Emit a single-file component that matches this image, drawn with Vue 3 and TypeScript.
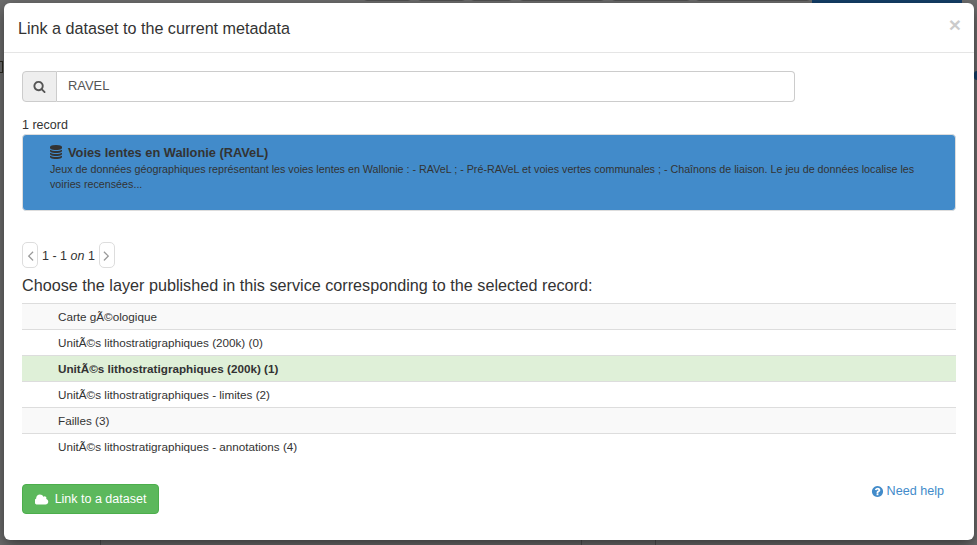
<script setup lang="ts">
interface Layer { name: string; selected?: boolean }
const layers: Layer[] = [
  { name: 'Carte gÃ©ologique' },
  { name: 'UnitÃ©s lithostratigraphiques (200k) (0)' },
  { name: 'UnitÃ©s lithostratigraphiques (200k) (1)', selected: true },
  { name: 'UnitÃ©s lithostratigraphiques - limites (2)' },
  { name: 'Failles (3)' },
  { name: 'UnitÃ©s lithostratigraphiques - annotations (4)' },
]
const tabs = [
  { left: 363, width: 49 },
  { left: 417, width: 49 },
  { left: 470, width: 43 },
  { left: 519, width: 86 },
  { left: 611, width: 80 },
  { left: 695, width: 116 },
]
</script>

<template>
  <div class="page">
    <div class="backdrop">
      <span v-for="t in tabs" :key="t.left" class="tab" :style="{ left: t.left + 'px', width: t.width + 'px' }"></span>
      <span class="bluebar"></span>
      <span class="bluedot"></span>
      <span class="leftmark"></span>
      <span class="vline v1"></span>
      <span class="vline v2"></span>
      <span class="vline v3"></span>
    </div>
    <div class="modal">
      <header class="head">
        <h4>Link a dataset to the current metadata</h4>
        <span class="close">×</span>
      </header>
      <main class="body">
        <div class="search">
          <span class="addon">
            <svg width="13" height="13" viewBox="0 0 1792 1792"><path fill="#555" d="M1216 832q0-185-131.500-316.500t-316.500-131.500-316.500 131.500-131.500 316.500 131.500 316.500 316.500 131.500 316.500-131.500 131.500-316.500zm512 832q0 52-38 90t-90 38q-54 0-90-38l-343-342q-179 124-399 124-143 0-273.500-55.500t-225-150-150-225-55.500-273.500 55.500-273.500 150-225 225-150 273.500-55.500 273.500 55.500 225 150 150 225 55.500 273.500q0 220-124 399l343 343q37 37 37 90z"/></svg>
          </span>
          <input class="field" value="RAVEL" />
        </div>
        <div class="count">1 record</div>
        <div class="record">
          <div class="rec-title">
            <svg width="14" height="14" viewBox="0 0 1792 1792"><path fill="#333" d="M896 768q237 0 443-43t325-127v170q0 69-103 128t-280 93.500-385 34.500-385-34.500-280-93.500-103-128v-170q119 84 325 127t443 43zm0 768q237 0 443-43t325-127v170q0 69-103 128t-280 93.500-385 34.500-385-34.500-280-93.500-103-128v-170q119 84 325 127t443 43zm0-384q237 0 443-43t325-127v170q0 69-103 128t-280 93.500-385 34.500-385-34.500-280-93.500-103-128v-170q119 84 325 127t443 43zm0-1152q208 0 385 34.500t280 93.500 103 128v128q0 69-103 128t-280 93.500-385 34.500-385-34.500-280-93.500-103-128v-128q0-69 103-128t280-93.500 385-34.500z"/></svg>
            <strong>Voies lentes en Wallonie (RAVeL)</strong>
          </div>
          <p>Jeux de données géographiques représentant les voies lentes en Wallonie : - RAVeL ; - Pré-RAVeL et voies vertes communales ; - Chaînons de liaison. Le jeu de données localise les voiries recensées...</p>
        </div>
        <div class="pager">
          <span class="pg">
            <svg width="17" height="17" viewBox="0 0 1792 1792"><path fill="#999" d="M1203 544q0 13-10 23l-393 393 393 393q10 10 10 23t-10 23l-50 50q-10 10-23 10t-23-10l-466-466q-10-10-10-23t10-23l466-466q10-10 23-10t23 10l50 50q10 10 10 23z"/></svg>
          </span>
          <span class="pg-text">1 - 1 <em>on</em> 1</span>
          <span class="pg">
            <svg width="17" height="17" viewBox="0 0 1792 1792"><path fill="#999" d="M1171 960q0 13-10 23l-466 466q-10 10-23 10t-23-10l-50-50q-10-10-10-23t10-23l393-393-393-393q-10-10-10-23t10-23l50-50q10-10 23-10t23 10l466 466q10 10 10 23z"/></svg>
          </span>
        </div>
        <h5>Choose the layer published in this service corresponding to the selected record:</h5>
        <ul class="layers">
          <li v-for="(l, i) in layers" :key="i" :class="{ selected: l.selected, odd: i % 2 === 0 }">{{ l.name }}</li>
        </ul>
        <div class="foot">
          <button class="btn">
            <svg width="14" height="13" viewBox="0 0 1920 1792"><path fill="#fff" d="M1920 1216q0 159-112.500 271.500t-271.500 112.500h-1088q-185 0-316.500-131.500t-131.500-316.500q0-132 71-241.500t187-163.500q-2-28-2-43 0-212 150-362t362-150q158 0 286.500 88t187.500 230q70-62 166-62 106 0 181 75t75 181q0 75-41 138 129 30 213 134.500t84 239.500z" transform="translate(-96 0)"/></svg>
            Link to a dataset
          </button>
          <a class="help">
            <svg width="13" height="13" viewBox="0 0 1792 1792"><path fill="#428bca" d="M1024 1376v-192q0-14-9-23t-23-9h-192q-14 0-23 9t-9 23v192q0 14 9 23t23 9h192q14 0 23-9t9-23zm256-672q0-88-55.500-163t-138.500-116-170-41q-243 0-371 213-15 24 8 42l132 100q7 6 19 6 16 0 25-12 53-68 86-92 34-24 86-24 48 0 85.500 26t37.500 59q0 38-20 61t-68 45q-63 28-115.500 86.500t-52.500 125.500v36q0 14 9 23t23 9h192q14 0 23-9t9-23q0-19 21.500-49.500t54.500-49.500q32-18 49-28.500t46-35 44.500-48 28-60.500 12.500-81zm384 192q0 209-103 385.500t-279.500 279.500-385.500 103-385.500-103-279.500-279.500-103-385.500 103-385.500 279.500-279.500 385.500-103 385.500 103 279.500 279.500 103 385.500z"/></svg>
            Need help
          </a>
        </div>
      </main>
    </div>
  </div>
</template>

<style>
html, body { margin: 0; background: #6e6e6e; }
</style>

<style scoped>
.page {
  position: relative;
  width: 977px;
  height: 545px;
  box-sizing: border-box;
  padding: 3px 3px 5px 4px;
  background: #6e6e6e;
  overflow: hidden;
  font-family: "Liberation Sans", Arial, sans-serif;
  color: #333;
}
.backdrop {
  position: absolute;
  inset: 0;
}
.tab {
  position: absolute;
  top: -20px;
  height: 21px;
  border: 1px solid rgba(0, 0, 0, .25);
  border-radius: 4px;
  box-sizing: border-box;
}
.bluebar {
  position: absolute;
  left: 812px;
  top: 0;
  width: 150px;
  height: 4px;
  background: #15406a;
}
.bluedot {
  position: absolute;
  right: 0;
  top: 71px;
  width: 3px;
  height: 9px;
  border-radius: 3px 0 0 3px;
  background: #15406a;
}
.leftmark {
  position: absolute;
  left: 0;
  top: 61px;
  width: 3px;
  height: 12px;
  border: 1px solid #2c2a20;
  border-left: 0;
  box-sizing: border-box;
}
.vline {
  position: absolute;
  bottom: 0;
  width: 1px;
  height: 5px;
  background: rgba(0, 0, 0, .25);
}
.v1 { left: 100px; }
.v2 { left: 581px; }
.v3 { left: 655px; }
.modal {
  position: relative;
  height: 100%;
  box-sizing: border-box;
  background: #fff;
  border-radius: 6px;
  box-shadow: 0 5px 15px rgba(0, 0, 0, .5);
  display: flex;
  flex-direction: column;
}
.head {
  height: 50px;
  box-sizing: border-box;
  flex: none;
  display: flex;
  justify-content: space-between;
  align-items: flex-start;
  border-bottom: 1px solid #e5e5e5;
  padding: 15px 13px 0 14px;
}
h4 {
  margin: 0;
  font-size: 16.15px;
  font-weight: 400;
  line-height: 20px;
  color: #333;
}
.close {
  font-size: 21px;
  font-weight: 700;
  line-height: 14px;
  color: #000;
  opacity: .2;
}
.body {
  padding: 18px 18px 0;
  display: flex;
  flex-direction: column;
}
.search {
  display: flex;
  width: 773px;
  height: 31px;
}
.addon {
  width: 35px;
  flex: none;
  display: flex;
  align-items: center;
  justify-content: center;
  background: #eee;
  border: 1px solid #ccc;
  border-radius: 4px 0 0 4px;
  box-sizing: border-box;
}
.field {
  flex: 1;
  min-width: 0;
  box-sizing: border-box;
  border: 1px solid #ccc;
  border-left: 0;
  border-radius: 0 4px 4px 0;
  padding: 0 11px 2px;
  font: 12.9px "Liberation Sans", Arial, sans-serif;
  color: #555;
  outline: none;
}
.count {
  font-size: 12.5px;
  line-height: 17px;
  margin-top: 15px;
}
.record {
  height: 77px;
  box-sizing: border-box;
  background: #428bca;
  border: 1px solid #ddd;
  border-radius: 4px;
  padding: 9px 27px 0;
}
.rec-title {
  display: flex;
  align-items: center;
  gap: 5px;
  height: 16px;
  margin-left: -1px;
}
.rec-title strong { font-size: 12.8px; }
.record p {
  margin: 2px 0 0;
  font-size: 10.72px;
  line-height: 15px;
}
.pager {
  display: flex;
  align-items: center;
  height: 26px;
  margin-top: 31px;
  font-size: 12.5px;
}
.pg {
  width: 16px;
  height: 26px;
  box-sizing: border-box;
  display: flex;
  align-items: center;
  justify-content: center;
  border: 1px solid #ddd;
  border-radius: 5px;
}
.pg svg { flex: none; }
.pg-text { margin: 2px 4px 0; }
h5 {
  margin: 7px 0 0;
  font-size: 16.2px;
  font-weight: 400;
  line-height: 20px;
}
.layers {
  list-style: none;
  margin: 8px 0 0;
  padding: 0;
}
.layers li {
  height: 26px;
  box-sizing: border-box;
  border-top: 1px solid #ddd;
  padding: 4px 36px 0;
  font-size: 11.7px;
  line-height: 17px;
  background: #fff;
}
.layers li.odd { background: #f9f9f9; }
.layers li.selected { background: #dff0d8; font-weight: 700; }
.layers li:last-child { background: #fff; }
.foot {
  display: flex;
  justify-content: space-between;
  align-items: flex-start;
  margin-top: 25px;
  padding-right: 12px;
}
.btn {
  height: 30px;
  width: 137px;
  box-sizing: border-box;
  display: flex;
  align-items: center;
  justify-content: center;
  gap: 6px;
  background: #5cb85c;
  border: 1px solid #4cae4c;
  border-radius: 4px;
  color: #fff;
  font: 12.5px "Liberation Sans", Arial, sans-serif;
}
.help {
  display: flex;
  align-items: center;
  gap: 3px;
  font-size: 12.6px;
  color: #428bca;
}
</style>
